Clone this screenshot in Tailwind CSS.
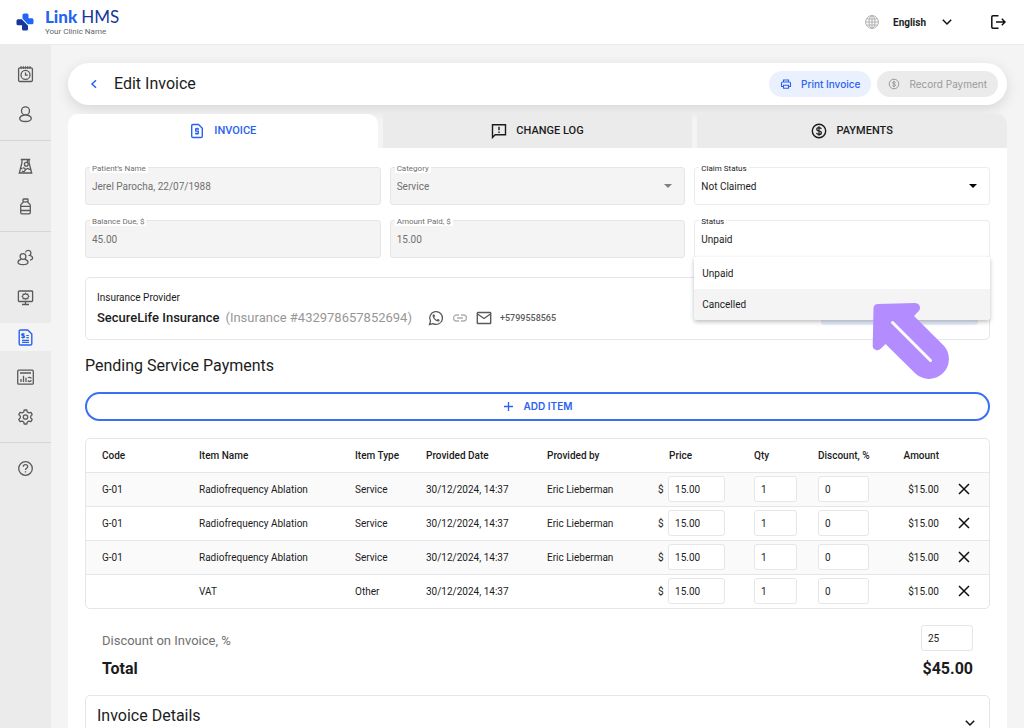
<!DOCTYPE html>
<html lang="en">
<head>
<meta charset="utf-8">
<meta name="viewport" content="width=device-width, initial-scale=1">
<title>Link HMS – Edit Invoice</title>
<script src="https://cdn.jsdelivr.net/npm/@tailwindcss/browser@4"></script>
</head>
<body class="flex h-screen flex-col overflow-hidden bg-[#f4f4f4] font-['Roboto',sans-serif] text-[10px] text-[#1c1c1c]">

<header class="flex h-[45px] shrink-0 items-center justify-between border-b border-[#ebebeb] bg-white pr-[18px] pl-4">
  <a href="#" class="flex items-center gap-[11px]">
    <svg class="size-[18px]" viewBox="0 0 18 18" aria-hidden="true">
      <path fill="#1f66f6" d="M8 .5h3a1.500 1.500 0 0 1 1.500 1.500V5.300H16a1.500 1.500 0 0 1 1.500 1.500v3A1.500 1.500 0 0 1 16 11.300h-4.200L6.500 5.600V2A1.500 1.500 0 0 1 8 .5Z"/>
      <path fill="#15379b" d="M2 6.300h3.800l6.200 6.500V16a1.500 1.500 0 0 1-1.500 1.500h-3A1.500 1.500 0 0 1 6 16v-3.800H2a1.500 1.500 0 0 1-1.500-1.500V7.800A1.500 1.500 0 0 1 2 6.300Z"/>
    </svg>
    <span class="flex flex-col pb-px">
      <span class="flex gap-1 font-['Lato',sans-serif] text-[17px] leading-5"><b class="font-black text-[#2464f0]">Link</b><span class="text-[#15379b]">HMS</span></span>
      <span class="text-[8px] leading-[10px] text-[#666]">Your Clinic Name</span>
    </span>
  </a>
  <div class="flex items-center">
    <button class="flex items-center gap-3.5 font-bold">
      <svg class="size-[14px]" viewBox="0 0 14 14" fill="none" stroke="#b0b0b0" aria-hidden="true"><circle cx="7" cy="7" r="6.400"/><ellipse cx="7" cy="7" rx="3" ry="6.400"/><path d="M7 .6v12.800M.6 7h12.800M1.500 4h11M1.500 10h11"/></svg>
      English
      <svg class="ml-0.5 size-[10px]" viewBox="0 0 10 10" fill="none" stroke="#111" stroke-width="1.500" aria-hidden="true"><path d="m.8 2.800 4.200 4.200 4.200-4.200"/></svg>
    </button>
    <button class="ml-[38px]" aria-label="Log out">
      <svg class="size-4" viewBox="0 0 16 16" fill="none" stroke="#111" stroke-width="1.500" aria-hidden="true"><path d="M8.500 1.800H3a1.200 1.200 0 0 0-1.200 1.200v10A1.200 1.200 0 0 0 3 14.200h5.500M6 8h8.800M11.800 4.800 15 8l-3.200 3.200"/></svg>
    </button>
  </div>
</header>

<div class="flex min-h-0 flex-1">
  <nav aria-label="Main" class="flex w-[51px] shrink-0 flex-col bg-[#ebebeb] pt-[9px] text-[#5a5a5a] [&_a]:my-1.5 [&_a]:flex [&_a]:h-7 [&_a]:shrink-0 [&_a]:items-center [&_a]:justify-center [&_hr]:my-[5px] [&_hr]:border-[#d6d6d6] [&_svg]:size-[17px] [&_svg]:fill-none [&_svg]:stroke-current">
    <a href="#" aria-label="Schedule"><svg viewBox="0 0 17 17" stroke-width="1.300"><rect x="1.600" y="1.800" width="13.800" height="13.700" rx="1.200"/><path d="M4 .3v2.500M6.300 .3v2.500M8.500 .3v2.500M10.700 .3v2.500M13 .3v2.500"/><circle cx="8.500" cy="8.900" r="4.500"/><path d="M8.500 6.400v2.800h2.300"/></svg></a>
    <a href="#" aria-label="Patients"><svg viewBox="0 0 17 17" stroke-width="1.300"><circle cx="8.500" cy="4.900" r="4"/><path d="M6 9.300c-2 .5-3.300 1.700-3.300 3.200 0 1.900 2.400 3 5.800 3s5.800-1.100 5.800-3c0-1.500-1.300-2.700-3.300-3.200"/><path d="M5.500 9.600c2-1 4-1 6 0"/></svg></a>
    <hr class="mt-1.5!">
    <a href="#" aria-label="Laboratory"><svg viewBox="0 0 17 17" stroke-width="1.300"><path d="M3.800 1.500h9.400M5 1.500v3L2.300 15h12.400L12 4.500v-3"/><circle cx="9.300" cy="6.300" r="1.900"/><path d="M3.300 10.500h2.200M5 12.800a1.800 1.800 0 1 0 1-2.800M8 12l2.500-1.500 3.300 1.300M10.500 1.500v2.800"/></svg></a>
    <a href="#" aria-label="Medication"><svg viewBox="0 0 17 17" stroke-width="1.300"><rect x="6" y="1" width="5" height="2.800" rx=".6"/><path d="M6.300 3.800c0 1.500-2.600 1.500-2.600 3.700V14.500c0 .8.500 1.300 1.300 1.300h7c.8 0 1.300-.5 1.300-1.300v-7c0-2.200-2.600-2.200-2.600-3.700M3.700 8.300h9.600M3.700 12.500h9.600"/></svg></a>
    <hr>
    <a href="#" aria-label="Staff"><svg viewBox="0 0 17 17" stroke-width="1.300"><circle cx="6" cy="7.500" r="2.900"/><path d="M4.200 10.300C2 10.800 1 12 1 13.300c0 1.600 2 2.400 5 2.400s5-.8 5-2.400c0-1.300-1-2.500-3.200-3M8.500 3.300c.3-1.300 1.300-2 2.600-2a2.700 2.700 0 0 1 1.500 5c1.800.4 3 1.300 3 2.700 0 1-.9 1.800-2.600 2.100"/></svg></a>
    <a href="#" aria-label="Workstation"><svg viewBox="0 0 17 17" stroke-width="1.300"><rect x="1.400" y="2" width="14.200" height="10.500" rx=".8"/><path d="M8.500 12.500v3M5 15.500h7"/><path stroke-width="1.100" d="m8.500 4.200.9 1.100 1.500-.2.100 1.400.9.900-.9.900-.1 1.300-1.500-.2-.9 1-.9-1-1.500.2-.1-1.300-.9-.9.900-.9.100-1.400 1.500.2Z"/></svg></a>
    <a href="#" aria-label="Invoices" aria-current="page" class="bg-[#f4f4f4] text-[#2962f0]"><svg viewBox="0 0 17 17" stroke-width="1.400"><path d="M3.500 1h7.200L14.800 5v9.700c0 .8-.5 1.300-1.300 1.300h-10c-.8 0-1.300-.5-1.300-1.300V2.300C2.200 1.500 2.700 1 3.500 1Z"/><path stroke-width="1.200" d="M7.500 5.400c-.3-.5-.8-.6-1.400-.6-2 0-1.800 1.800 0 1.900 2 .1 2 2-.1 2-.7 0-1.200-.2-1.500-.7M6 4v5.400M9.300 6.500h2.500M9.300 8.700h2.500M5 11.300h7M5 13.400h7"/></svg></a>
    <a href="#" aria-label="Reports"><svg viewBox="0 0 17 17" stroke-width="1.300"><rect x=".7" y="1.200" width="15.600" height="14" rx="1"/><path d="M3 4h11M4 13v-3M6.500 13V6.700M9 13V8.700M11 9c.7-1 2.800-.9 3.300.5M14.300 11.200c-.6 1.500-2.700 1.700-3.500.5"/></svg></a>
    <a href="#" aria-label="Settings"><svg viewBox="0 0 17 17" stroke-width="1.300" stroke-linejoin="round"><path d="M7.200 1h2.600l.5 2 1.600.9 2-.6 1.300 2.300-1.500 1.500v1.800l1.500 1.500-1.300 2.300-2-.6-1.600.9-.5 2H7.200l-.5-2-1.600-.9-2 .6-1.300-2.300 1.500-1.500V7.100L1.800 5.600l1.300-2.300 2 .6 1.600-.9Z"/><circle cx="8.500" cy="8" r="2.200"/></svg></a>
    <hr>
    <a href="#" aria-label="Help"><svg viewBox="0 0 17 17" stroke-width="1.300"><circle cx="8.500" cy="8.500" r="6.800"/><path d="M6.300 6.800c0-1.300 1-2.100 2.200-2.100s2.200.8 2.200 2c0 1.500-2.200 1.600-2.200 3.300M8.500 11.200v1.400"/></svg></a>
  </nav>

  <main class="min-w-0 flex-1 overflow-y-auto pt-[18px] pr-[17px] pl-[17px] [scrollbar-width:none]">
    <div class="flex h-[42px] items-center rounded-full bg-white pr-[9px] pl-[19px] shadow-[0_4px_14px_rgba(0,0,0,0.12)]">
      <button class="flex size-3.5 items-center justify-center" aria-label="Back"><svg class="size-[10px]" viewBox="0 0 10 10" fill="none" stroke="#2962f0" stroke-width="1.500" aria-hidden="true"><path d="M7 1.200 3 5l4 3.800"/></svg></button>
      <h1 class="ml-[13px] text-[16px]">Edit Invoice</h1>
      <div class="ml-auto flex gap-1.5 font-['Inter',sans-serif]">
        <button class="flex h-[26px] items-center gap-[9px] rounded-full bg-[#eaf0fe] px-[11px] font-medium text-[#2962f0]">
          <svg class="size-3" viewBox="0 0 12 12" fill="none" stroke="currentColor" stroke-width="1.100" aria-hidden="true"><path d="M3.500 4V2h5v2M3.300 8.500H1.500V5.300c0-.8.500-1.300 1.200-1.300h6.600c.7 0 1.200.5 1.200 1.300v3.200H8.700M3.500 7.200h5v3h-5Z"/></svg>
          Print Invoice
        </button>
        <button disabled class="flex h-[26px] items-center gap-[9px] rounded-full bg-[#ebebeb] px-[11px] text-[#9a9a9a]">
          <svg class="size-3" viewBox="0 0 12 12" fill="none" stroke="currentColor" aria-hidden="true"><circle cx="6" cy="6" r="4.800"/><path d="M7.500 4.500C7.200 3.900 6.700 3.700 6 3.700c-2 0-2 2 0 2.200 2.200.2 2.100 2.400 0 2.400-.8 0-1.400-.3-1.600-.9M6 2.800v6.400"/></svg>
          Record Payment
        </button>
      </div>
    </div>

    <div role="tablist" class="mt-[9px] grid grid-cols-3 gap-[5px] text-[11px] font-medium [&_button]:flex [&_button]:h-[34px] [&_button]:items-center [&_button]:justify-center [&_button]:gap-[9px] [&_svg]:size-4">
      <button role="tab" aria-selected="true" class="rounded-t-[10px] bg-white text-[#2962f0]">
        <svg viewBox="0 0 16 16" fill="none" stroke="currentColor" stroke-width="1.400" aria-hidden="true"><path d="M4 1.500h5.500l3.800 3.800V13.200c0 .8-.5 1.300-1.300 1.300H4c-.8 0-1.300-.5-1.300-1.300V2.800c0-.8.500-1.300 1.300-1.300Z"/><path stroke-width="1.300" d="M10 6H6.700v2.200h2.600v2.300H6M8 4.800V6M8 10.500v1.300"/></svg>
        INVOICE
      </button>
      <button role="tab" aria-selected="false" class="bg-[#ebebeb]">
        <svg viewBox="0 0 16 16" fill="none" stroke="currentColor" stroke-width="1.400" aria-hidden="true"><path d="M1.500 14.500V1.800h13v10H4.200Z"/><path d="M8 3.800v3.500M8 8.600V10"/></svg>
        CHANGE LOG
      </button>
      <button role="tab" aria-selected="false" class="rounded-tr-[10px] bg-[#ebebeb]">
        <svg viewBox="0 0 16 16" fill="none" stroke="currentColor" stroke-width="1.400" aria-hidden="true"><circle cx="8" cy="8" r="6.700"/><path stroke-width="1.200" d="M10.300 6C10 5 9.200 4.600 8 4.600c-3 0-3 3 0 3.400 3.300.4 3 3.500 0 3.500-1.300 0-2.200-.5-2.500-1.600M8 3.200v9.600"/></svg>
        PAYMENTS
      </button>
    </div>

    <section class="bg-white px-[17px] pt-[19px] pb-6">
      <form class="grid grid-cols-3 gap-x-[9px] gap-y-[15px] [&_input]:h-full [&_input]:w-full [&_input]:bg-transparent [&_input]:px-1.5 [&_label]:absolute [&_label]:-top-[3px] [&_label]:left-1 [&_label]:bg-white [&_label]:px-0.5 [&_label]:text-[8px] [&_label]:leading-[8px] [&_select]:h-full [&_select]:w-full [&_select]:appearance-none [&_select]:bg-transparent [&_select]:px-1.5 [&_select]:opacity-100">
        <div class="relative h-[38px] rounded-[3px] border border-[#e6e6e6] bg-[#f4f4f4] text-[#707070]"><label for="patient">Patient’s Name</label><input id="patient" disabled value="Jerel Parocha, 22/07/1988"></div>
        <div class="relative h-[38px] rounded-[3px] border border-[#e6e6e6] bg-[#f4f4f4] text-[#707070]"><label for="category">Category</label><select id="category" disabled><option>Service</option></select>
          <svg class="absolute top-4 right-3 h-1 w-2" viewBox="0 0 8 4" fill="#808080" aria-hidden="true"><path d="M0 0h8L4 4Z"/></svg></div>
        <div class="relative h-[38px] rounded-[3px] border border-[#ececec]"><label for="claim">Claim Status</label><select id="claim"><option>Not Claimed</option><option>Claimed</option></select>
          <svg class="pointer-events-none absolute top-4 right-3 h-1 w-2" viewBox="0 0 8 4" fill="#000" aria-hidden="true"><path d="M0 0h8L4 4Z"/></svg></div>
        <div class="relative h-[38px] rounded-[3px] border border-[#e6e6e6] bg-[#f4f4f4] text-[#707070]"><label for="due">Balance Due, $</label><input id="due" disabled value="45.00"></div>
        <div class="relative h-[38px] rounded-[3px] border border-[#e6e6e6] bg-[#f4f4f4] text-[#707070]"><label for="paid">Amount Paid, $</label><input id="paid" disabled value="15.00"></div>
        <div class="relative h-[38px] rounded-[3px] border border-[#ececec]"><label for="status">Status</label><select id="status"><option>Unpaid</option><option>Cancelled</option></select>
          <ul role="listbox" aria-label="Status" class="absolute top-full -right-px -left-px z-10 rounded-b-[3px] bg-white shadow-[0_2px_4px_rgba(0,0,0,0.25)]">
            <li role="option" aria-selected="true" class="flex h-8 items-center px-2">Unpaid</li>
            <li role="option" aria-selected="false" class="flex h-[31px] items-center rounded-b-[3px] bg-[#f4f4f4] px-2">Cancelled</li>
          </ul>
          <svg class="pointer-events-none absolute top-[80px] right-[35px] z-20 size-[84px]" viewBox="0 0 84 84" aria-hidden="true"><path fill="#b38cff" d="M8 3 45 2Q50 2.300 50 7.300q0 1.500-1.500 3L44 15 74.100 44.900A20 20 0 0 1 45.900 73.100L15.500 43 11 47.500Q8.500 50 6 49 2.500 48 2.700 44.500L3.500 7.500Q3.500 3 8 3Z"/><path stroke="#fff" stroke-width="3" stroke-linecap="round" d="M22.500 21.500 60.500 59.500"/></svg>
        </div>
      </form>

      <div class="mt-[19px] flex h-[63px] items-center justify-between rounded-[5px] border border-[#e3e7ea] px-[11px]">
        <div>
          <p class="leading-4">Insurance Provider</p>
          <div class="mt-0.5 flex items-center leading-5">
            <span class="text-[13px] font-medium">SecureLife Insurance</span>
            <span class="ml-1.5 text-[13px] text-[#979797]">(Insurance #432978657852694)</span>
            <a href="#" aria-label="WhatsApp" class="ml-4"><svg class="size-4" viewBox="0 0 16 16" fill="none" stroke="#5a5a5a" stroke-width="1.300"><path d="m1.500 14.500 1-3.400A6.400 6.400 0 1 1 5 13.600Z"/><path fill="#5a5a5a" stroke="none" d="M5.800 4.300c-.8 0-1.400 1-1.200 1.900.5 2.400 2.500 4.600 5 5.200 1 .2 2-.4 2-1.500 0-.4-1.500-1-1.800-1l-.9.900C7.700 9.400 6.700 8.300 6.300 7.200l.7-.9c.1-.4-.5-2-1.200-2Z"/></svg></a>
            <a href="#" aria-label="Copy link" class="ml-2"><svg class="size-4" viewBox="0 0 16 16" fill="none" stroke="#b0b0b0" stroke-width="1.300"><path d="M7 5H4.500a3 3 0 0 0 0 6H7M9 5h2.500a3 3 0 0 1 0 6H9M5 8h6"/></svg></a>
            <a href="#" aria-label="Email" class="ml-2"><svg class="size-4" viewBox="0 0 16 16" fill="none" stroke="#5a5a5a" stroke-width="1.400"><rect x="1.300" y="2.500" width="13.400" height="11" rx=".6"/><path d="m1.500 4 6.500 4.500L14.500 4"/></svg></a>
            <a href="tel:+5799558565" class="ml-2 text-[9px] font-medium text-[#5a5a5a]">+5799558565</a>
          </div>
        </div>
        <button aria-label="Insurance details" class="mt-1 h-7 w-[157px] rounded-[3px] bg-[#e6ecfb]"></button>
      </div>

      <h2 class="mt-[15px] text-[16px] leading-[22px]">Pending Service Payments</h2>

      <button class="mt-[15px] flex h-[29px] w-full items-center justify-center gap-2.5 rounded-full border-2 border-[#3b70f2] font-['Inter',sans-serif] font-semibold text-[#2962f0]">
        <svg class="size-[11px]" viewBox="0 0 11 11" stroke="currentColor" stroke-width="1.300" aria-hidden="true"><path d="M5.500 1v9M1 5.500h9"/></svg>
        ADD ITEM
      </button>

      <div class="mt-[17px] overflow-hidden rounded-[5px] border border-[#e3e7ea]">
        <table class="w-full table-fixed border-collapse text-left [&_input]:h-[26px] [&_input]:rounded-[3px] [&_input]:border [&_input]:border-[#e6e6e6] [&_input]:bg-white [&_input]:px-1.5 [&_td]:p-0 [&_td:first-child]:pl-4 [&_th]:p-0 [&_th]:font-medium [&_th:first-child]:pl-4">
          <colgroup><col class="w-[113px]"><col><col class="w-[71px]"><col class="w-[121px]"><col class="w-[111px]"><col class="w-[96px]"><col class="w-[64px]"><col class="w-[72px]"><col class="w-[49px]"><col class="w-[50px]"></colgroup>
          <thead><tr class="h-[33px]"><th>Code</th><th>Item Name</th><th>Item Type</th><th>Provided Date</th><th>Provided by</th><th><span class="ml-[11px]">Price</span></th><th>Qty</th><th>Discount, %</th><th class="text-right">Amount</th><th aria-label="Remove"></th></tr></thead>
          <tbody class="[&_button]:flex [&_button]:w-full [&_button]:justify-center [&_svg]:size-3 [&_svg]:stroke-[#111] [&_svg]:stroke-[1.5] [&_tr]:h-[34px] [&_tr]:border-t [&_tr]:border-[#e3e7ea]">
            <tr class="bg-[#fafafa]"><td>G-01</td><td>Radiofrequency Ablation</td><td>Service</td><td>30/12/2024, 14:37</td><td>Eric Lieberman</td>
              <td>$ <input aria-label="Price" class="ml-0.5 w-[57px]" value="15.00"></td><td><input aria-label="Quantity" class="w-[43px]" value="1"></td><td><input aria-label="Discount, %" class="w-[51px]" value="0"></td><td class="text-right">$15.00</td>
              <td><button aria-label="Remove item"><svg viewBox="0 0 12 12"><path d="m1 1 10 10M11 1 1 11"/></svg></button></td></tr>
            <tr><td>G-01</td><td>Radiofrequency Ablation</td><td>Service</td><td>30/12/2024, 14:37</td><td>Eric Lieberman</td>
              <td>$ <input aria-label="Price" class="ml-0.5 w-[57px]" value="15.00"></td><td><input aria-label="Quantity" class="w-[43px]" value="1"></td><td><input aria-label="Discount, %" class="w-[51px]" value="0"></td><td class="text-right">$15.00</td>
              <td><button aria-label="Remove item"><svg viewBox="0 0 12 12"><path d="m1 1 10 10M11 1 1 11"/></svg></button></td></tr>
            <tr class="bg-[#fafafa]"><td>G-01</td><td>Radiofrequency Ablation</td><td>Service</td><td>30/12/2024, 14:37</td><td>Eric Lieberman</td>
              <td>$ <input aria-label="Price" class="ml-0.5 w-[57px]" value="15.00"></td><td><input aria-label="Quantity" class="w-[43px]" value="1"></td><td><input aria-label="Discount, %" class="w-[51px]" value="0"></td><td class="text-right">$15.00</td>
              <td><button aria-label="Remove item"><svg viewBox="0 0 12 12"><path d="m1 1 10 10M11 1 1 11"/></svg></button></td></tr>
            <tr><td></td><td>VAT</td><td>Other</td><td>30/12/2024, 14:37</td><td></td>
              <td>$ <input aria-label="Price" class="ml-0.5 w-[57px]" value="15.00"></td><td><input aria-label="Quantity" class="w-[43px]" value="1"></td><td><input aria-label="Discount, %" class="w-[51px]" value="0"></td><td class="text-right">$15.00</td>
              <td><button aria-label="Remove item"><svg viewBox="0 0 12 12"><path d="m1 1 10 10M11 1 1 11"/></svg></button></td></tr>
          </tbody>
        </table>
      </div>

      <div class="mt-4 flex items-end justify-between px-[17px]">
        <label for="discount" class="text-[13px] leading-5 text-[#707070]">Discount on Invoice, %</label>
        <input id="discount" class="h-[26px] w-[52px] rounded-[3px] border border-[#e6e6e6] px-1.5" value="25">
      </div>
      <div class="mt-2 flex items-center justify-between px-[17px] text-[16px] leading-5 font-bold"><span>Total</span><span>$45.00</span></div>

      <div class="mt-4 flex h-[57px] items-start justify-between rounded-[5px] border border-[#e3e7ea] px-[11px] pt-2.5">
        <h2 class="text-[16px] leading-5">Invoice Details</h2>
        <button aria-label="Expand invoice details" class="mt-3 mr-[3px]"><svg class="size-[10px]" viewBox="0 0 10 10" fill="none" stroke="#111" stroke-width="1.500" aria-hidden="true"><path d="m.8 2.800 4.200 4.200 4.200-4.200"/></svg></button>
      </div>
    </section>
  </main>
</div>
</body>
</html>
